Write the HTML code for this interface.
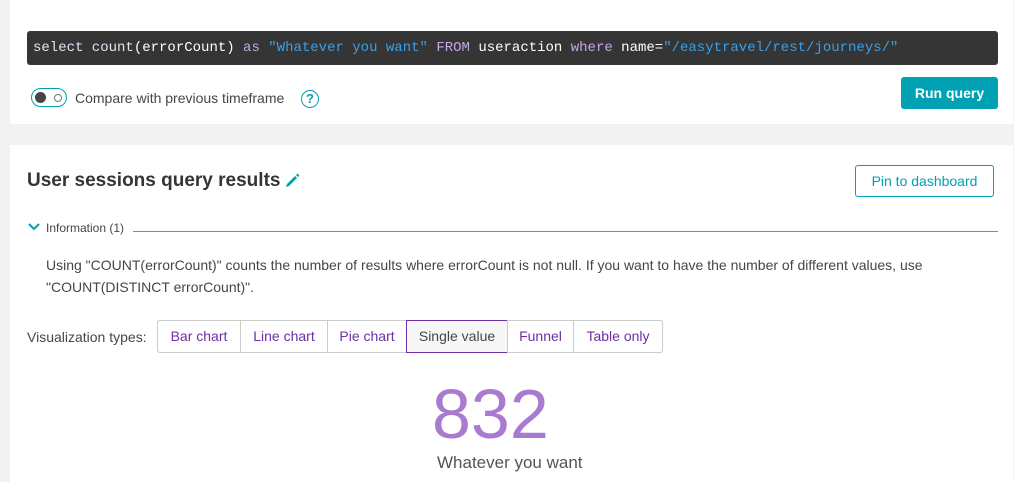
<!DOCTYPE html>
<html><head><meta charset="utf-8"><style>
*{box-sizing:border-box;margin:0;padding:0}
body{width:1014px;height:482px;overflow:hidden;background:#f2f2f2;font-family:"Liberation Sans",sans-serif;color:#454646;position:relative}
.card{position:absolute;left:10px;right:1px;background:#fff}
.code{position:absolute;left:27px;top:31px;width:971px;height:34px;background:#353535;border-radius:3px;font-family:"Liberation Mono",monospace;font-size:14px;line-height:34px;padding-left:6px;color:#fff;white-space:pre}
.k{color:#c4a7e7}.s{color:#3aa0e8}.l{color:#e8e0f5}
.tog{position:absolute;left:31px;top:88px;width:36px;height:19px;border:1.5px solid #00a1b2;border-radius:10px}
.tog:before{content:"";position:absolute;left:3px;top:2.5px;width:11px;height:11px;border-radius:50%;background:#454646}
.tog:after{content:"";position:absolute;left:22px;top:5px;width:6px;height:6px;border-radius:50%;border:1px solid #777}
.btn{position:absolute;background:#00a1b2;color:#fff;font-size:14px;font-weight:bold;text-align:center;border-radius:3px}
.seg{position:absolute;top:320px;height:33px;border:1px solid #ccc;font-size:14px;line-height:31px;text-align:center;color:#6f2da8}
</style></head><body>
<div class="card" style="top:0;height:124px"></div>
<div class="card" style="top:145px;bottom:0"></div>
<div class="code"><span class="l">select count</span>(errorCount) <span class="k">as</span> <span class="s">"Whatever you want"</span> <span class="k">FROM</span> useraction <span class="k">where</span> name=<span class="s">"/easytravel/rest/journeys/"</span></div>
<div class="tog"></div>
<div style="position:absolute;left:75px;top:90px;font-size:14px">Compare with previous timeframe</div>
<div style="position:absolute;left:301px;top:90px;width:18px;height:18px;border:1.5px solid #00a1b2;border-radius:50%;color:#00a1b2;font-size:13px;font-weight:bold;text-align:center;line-height:15px">?</div>
<div class="btn" style="left:901px;top:77px;width:97px;height:32px;line-height:32px">Run query</div>
<div style="position:absolute;left:27px;top:170px;font-size:19px;font-weight:bold;color:#353535">User sessions query results</div>
<svg style="position:absolute;left:284px;top:172px" width="17" height="17" viewBox="0 0 17 17"><path d="M3 12 L11 4 L13 6 L5 14 L2 15 Z" fill="#00a1b2"/><path d="M12 3 L13.5 1.5 L15.5 3.5 L14 5 Z" fill="#00a1b2"/></svg>
<div style="position:absolute;left:855px;top:165px;width:139px;height:32px;border:1px solid #00a1b2;border-radius:3px;color:#00a1b2;font-size:14px;text-align:center;line-height:30px">Pin to dashboard</div>
<svg style="position:absolute;left:28px;top:222px" width="12" height="10"><path d="M1 2 L6 7 L11 2" stroke="#00a1b2" stroke-width="2" fill="none"/></svg>
<div style="position:absolute;left:46px;top:221px;font-size:12px">Information (1)</div>
<div style="position:absolute;left:133px;top:231px;width:865px;height:1px;background:#888"></div>
<div style="position:absolute;left:46px;top:254px;font-size:14px;line-height:22px;width:940px">Using "COUNT(errorCount)" counts the number of results where errorCount is not null. If you want to have the number of different values, use "COUNT(DISTINCT errorCount)".</div>
<div style="position:absolute;left:27px;top:329px;font-size:14px">Visualization types:</div>
<div style="position:absolute;left:157px;top:320px;width:506px;height:33px;border:1px solid #ccc;border-radius:3px"></div>
<div class="seg" style="left:157px;width:84px;border-radius:3px 0 0 3px">Bar chart</div>
<div class="seg" style="left:240px;width:88px">Line chart</div>
<div class="seg" style="left:327px;width:80px">Pie chart</div>
<div class="seg" style="left:406px;width:102px;border-color:#6f2da8;background:#f7f7f7;color:#454646">Single value</div>
<div class="seg" style="left:507px;width:67px">Funnel</div>
<div class="seg" style="left:573px;width:90px;border-radius:0 3px 3px 0">Table only</div>
<div style="position:absolute;left:432px;top:369px;font-size:70px;color:#a97ad0;line-height:90px">832</div>
<div style="position:absolute;left:437px;top:453px;font-size:17px;color:#555">Whatever you want</div>
</body></html>
